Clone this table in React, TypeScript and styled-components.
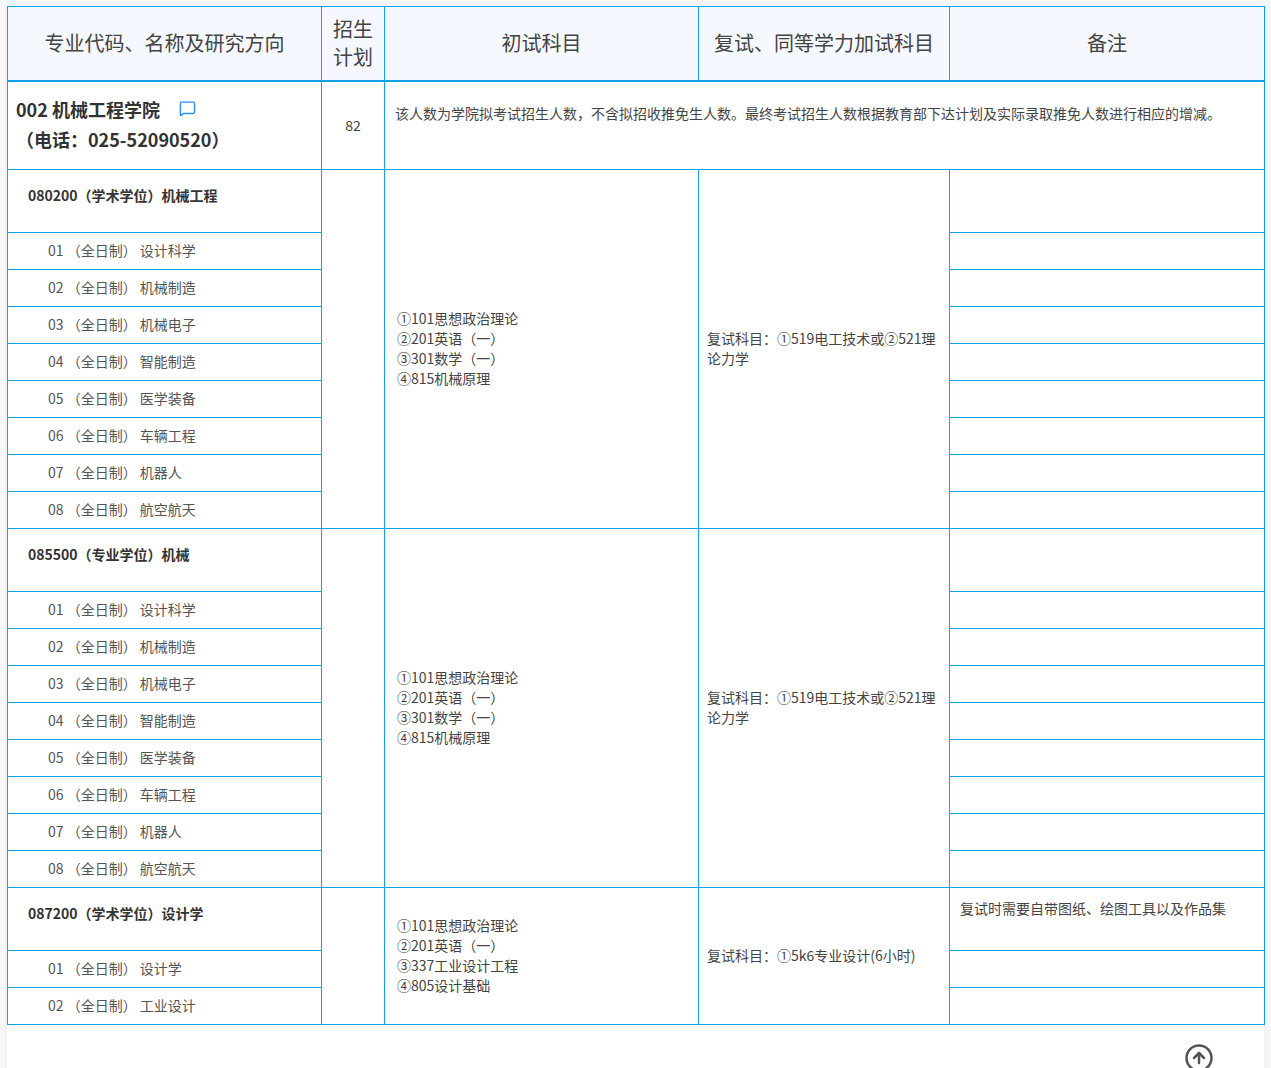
import React from 'react';
import styled, { createGlobalStyle } from 'styled-components';
import { MessageSquare, CircleArrowUp } from 'lucide-react';

const LINE = '#0ea2e6';

interface Group {
  code: string;
  directions: string[];
  subjects: string[];
  retest: string;
  note?: string;
}

const machineDirections = [
  '01 （全日制） 设计科学',
  '02 （全日制） 机械制造',
  '03 （全日制） 机械电子',
  '04 （全日制） 智能制造',
  '05 （全日制） 医学装备',
  '06 （全日制） 车辆工程',
  '07 （全日制） 机器人',
  '08 （全日制） 航空航天',
];

const machineSubjects = ['①101思想政治理论', '②201英语（一）', '③301数学（一）', '④815机械原理'];

const groups: Group[] = [
  {
    code: '080200（学术学位）机械工程',
    directions: machineDirections,
    subjects: machineSubjects,
    retest: '复试科目：①519电工技术或②521理论力学',
  },
  {
    code: '085500（专业学位）机械',
    directions: machineDirections,
    subjects: machineSubjects,
    retest: '复试科目：①519电工技术或②521理论力学',
  },
  {
    code: '087200（学术学位）设计学',
    directions: ['01 （全日制） 设计学', '02 （全日制） 工业设计'],
    subjects: ['①101思想政治理论', '②201英语（一）', '③337工业设计工程', '④805设计基础'],
    retest: '复试科目：①5k6专业设计(6小时)',
    note: '复试时需要自带图纸、绘图工具以及作品集',
  },
];

const App: React.FC = () => {
  return (
    <>
      <GlobalStyle />
      <Card>
        <Table>
          <colgroup>
            <col style={{ width: 314 }} />
            <col style={{ width: 63 }} />
            <col style={{ width: 314 }} />
            <col style={{ width: 251 }} />
            <col style={{ width: 315 }} />
          </colgroup>
          <thead>
            <HeadRow>
              <HeadCell>专业代码、名称及研究方向</HeadCell>
              <HeadCell $narrow>招生计划</HeadCell>
              <HeadCell>初试科目</HeadCell>
              <HeadCell>复试、同等学力加试科目</HeadCell>
              <HeadCell>备注</HeadCell>
            </HeadRow>
          </thead>
          <tbody>
            <CollegeRow>
              <CollegeCell>
                <CollegeTitle>
                  002 机械工程学院
                  <MessageSquare size={17} color="#2d8cf0" strokeWidth={2} />
                </CollegeTitle>
                <CollegePhone>（电话：025-52090520）</CollegePhone>
              </CollegeCell>
              <PlanCell>82</PlanCell>
              <CollegeNote colSpan={3}>
                该人数为学院拟考试招生人数，不含拟招收推免生人数。最终考试招生人数根据教育部下达计划及实际录取推免人数进行相应的增减。
              </CollegeNote>
            </CollegeRow>
            {groups.map((g) => (
              <React.Fragment key={g.code}>
                <MajorRow>
                  <MajorCell>{g.code}</MajorCell>
                  <PlanCell rowSpan={g.directions.length + 1} />
                  <SubjectCell rowSpan={g.directions.length + 1}>
                    {g.subjects.map((s) => (
                      <div key={s}>{s}</div>
                    ))}
                  </SubjectCell>
                  <RetestCell rowSpan={g.directions.length + 1}>{g.retest}</RetestCell>
                  <RemarkCell>{g.note}</RemarkCell>
                </MajorRow>
                {g.directions.map((d) => (
                  <DirectionRow key={d}>
                    <DirectionCell>{d}</DirectionCell>
                    <RemarkCell />
                  </DirectionRow>
                ))}
              </React.Fragment>
            ))}
          </tbody>
        </Table>
        <Footer>
          <TopButton aria-label="回到顶部">
            <CircleArrowUp size={30} color="#555" strokeWidth={2} />
          </TopButton>
        </Footer>
      </Card>
    </>
  );
};

const GlobalStyle = createGlobalStyle`
  html, body {
    margin: 0;
    padding: 0;
    background: #f6f7f9;
  }
  body {
    font-family: "Noto Sans CJK SC", "Microsoft YaHei", sans-serif;
    color: #444;
  }
`;

const Card = styled.div`
  margin: 6px 7px 0 7px;
  background: #fff;
  box-shadow: 0 0 6px rgba(0, 0, 0, 0.05);
  min-height: 1100px;
`;

const Table = styled.table`
  width: 100%;
  border-collapse: collapse;
  table-layout: fixed;
  font-size: 14px;
`;

const HeadRow = styled.tr`
  height: 74px;
`;

const HeadCell = styled.th<{ $narrow?: boolean }>`
  background: #f5f8fe;
  border: 1px solid ${LINE};
  border-bottom: 2px solid ${LINE};
  font-weight: normal;
  font-size: 20px;
  line-height: 28px;
  color: #444;
  padding: ${(p) => (p.$narrow ? '0 10px' : '0 8px')};
  text-align: center;
  vertical-align: middle;
`;

const Cell = styled.td`
  border: 1px solid ${LINE};
  padding: 0 8px;
  vertical-align: middle;
  color: #444;
  line-height: 20px;
`;

const CollegeRow = styled.tr`
  height: 89px;
`;

const CollegeCell = styled(Cell)`
  vertical-align: top;
  padding: 12px 8px 10px 8px;
  font-weight: bold;
  font-size: 18px;
  color: #333;
  line-height: 30px;
`;

const CollegeTitle = styled.div`
  display: flex;
  align-items: center;
  gap: 19px;
`;

const CollegePhone = styled.div``;

const PlanCell = styled(Cell)`
  text-align: center;
`;

const CollegeNote = styled(Cell)`
  vertical-align: top;
  padding: 21px 10px 0 10px;
  font-size: 14px;
`;

const MajorRow = styled.tr`
  height: 63px;
`;

const MajorCell = styled(Cell)`
  vertical-align: top;
  padding: 15px 20px 0 20px;
  font-weight: bold;
  color: #333;
`;

const DirectionRow = styled.tr`
  height: 37px;
`;

const DirectionCell = styled(Cell)`
  padding: 0 8px 2px 40px;
  color: #555;
`;

const SubjectCell = styled(Cell)`
  padding: 0 12px 2px 12px;
`;

const RetestCell = styled(Cell)`
  padding: 0 8px 2px 8px;
`;

const RemarkCell = styled(Cell)`
  vertical-align: top;
  padding: 10px 10px 0 10px;
`;

const Footer = styled.div`
  display: flex;
  justify-content: flex-end;
  padding: 18px 50px 0 0;
`;

const TopButton = styled.button`
  border: none;
  background: none;
  padding: 0;
  display: flex;
  cursor: pointer;
`;

export default App;
